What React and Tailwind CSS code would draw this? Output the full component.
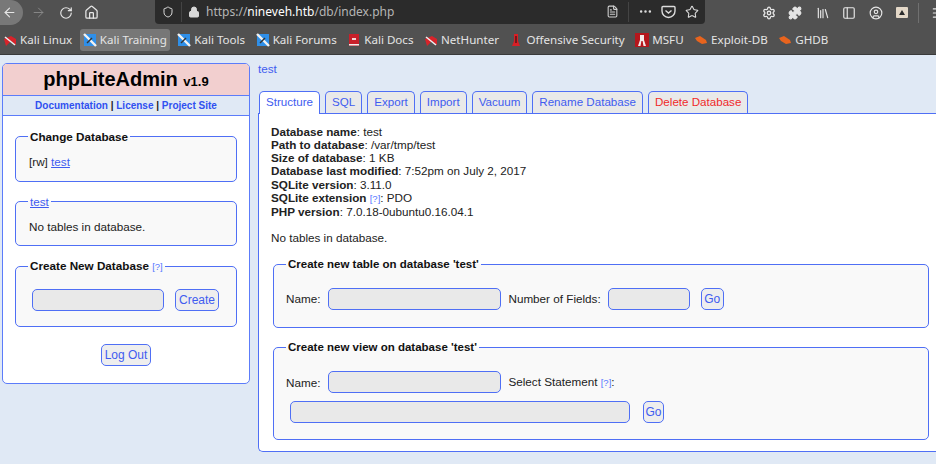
import React from 'react';
import { ArrowLeft, ArrowRight, RotateCw, Home, Shield, Lock, FileText, Ellipsis, Star, Settings, Puzzle, Library, PanelLeft, CircleUser, Menu } from 'lucide-react';

const bookmarks = [
  { name: 'Kali Linux', icon: 'kali' },
  { name: 'Kali Training', icon: 'blue', active: true },
  { name: 'Kali Tools', icon: 'blue' },
  { name: 'Kali Forums', icon: 'blue' },
  { name: 'Kali Docs', icon: 'docs' },
  { name: 'NetHunter', icon: 'kali' },
  { name: 'Offensive Security', icon: 'offsec' },
  { name: 'MSFU', icon: 'msfu' },
  { name: 'Exploit-DB', icon: 'orange' },
  { name: 'GHDB', icon: 'orange' },
];

const BookmarkIcon = ({ type }) => {
  if (type === 'kali') {
    return (
      <svg width="14" height="14" viewBox="0 0 14 14" className="shrink-0">
        <path d="M1 6 L8 3 L13 6 L13 12 L8 8 L3 13 Z" fill="#d8232a" />
        <path d="M2 4 L12 12" stroke="#eee" strokeWidth="1.6" />
      </svg>
    );
  }
  if (type === 'blue') {
    return (
      <svg width="14" height="14" viewBox="0 0 14 14" className="shrink-0">
        <rect x="1" y="1" width="12" height="12" fill="#2f8fe8" />
        <path d="M1 1 L13 13" stroke="#f2f2f2" strokeWidth="2.4" />
        <path d="M4 10 L9 5" stroke="#333" strokeWidth="1.4" />
      </svg>
    );
  }
  if (type === 'docs') {
    return (
      <svg width="14" height="14" viewBox="0 0 14 14" className="shrink-0">
        <rect x="2" y="1" width="10" height="12" fill="#c8202a" />
        <rect x="5" y="5" width="4" height="2" fill="#f3d6d6" />
        <rect x="2" y="11" width="10" height="1.5" fill="#eee" />
      </svg>
    );
  }
  if (type === 'offsec') {
    return (
      <svg width="14" height="14" viewBox="0 0 14 14" className="shrink-0">
        <path d="M5 1 H9 V8 L11 13 H3 L5 8 Z" fill="#d81f26" />
        <rect x="6.4" y="3" width="1.2" height="7" fill="#3a1010" />
      </svg>
    );
  }
  if (type === 'msfu') {
    return (
      <svg width="14" height="14" viewBox="0 0 14 14" className="shrink-0">
        <rect width="14" height="14" fill="#b5161c" />
        <path d="M5 2 H9 V7 L11 13 H8.5 L7.6 8 H6.4 L5.5 13 H3 L5 7 Z" fill="#f4e9e9" />
      </svg>
    );
  }
  return (
    <svg width="14" height="14" viewBox="0 0 14 14" className="shrink-0">
      <path d="M1 5 L6 3 L12 7 L13 10 L8 11 L3 8 Z" fill="#e8641e" />
    </svg>
  );
};

const Help = () => <a className="text-[9.5px] font-normal text-[#5577ff]">[?]</a>;

const Field = ({ w }) => (
  <div className={`${w} h-[22px] shrink-0 bg-[#e9e9e9] border border-[#4f6ff5] rounded-[5px]`} />
);

const Btn = ({ children, w }) => (
  <button className={`${w} h-[22px] shrink-0 bg-[#eeeeee] border border-[#4f6ff5] rounded-[5px] text-[#3f5cf0] text-[12px] leading-none`}>
    {children}
  </button>
);

const Tab = ({ children, active, red }) => (
  <div
    className={`px-[6px] pt-[2px] border border-b-0 border-[#4f6ff5] rounded-t-[5px] text-[11.6px] leading-[16px] relative ${
      active ? 'bg-white text-[#3f5cf0] h-[23px] mb-[-1px] z-10' : 'h-[22px] bg-[#e9e9e9]'
    } ${red ? 'text-[#f02a2a]' : active ? '' : 'text-[#3f5cf0]'}`}
  >
    {children}
  </div>
);

export default function App() {
  return (
    <div className="w-[936px] h-[464px] overflow-hidden bg-[#e0e9f5] font-['Liberation_Sans',Arial,sans-serif] text-[11.7px] leading-[13.3px] text-[#222]">
      {/* browser chrome */}
      <div className="h-[55px] bg-[#515151] border-b border-[#3a3a3a] font-['Noto_Sans',sans-serif]">
        <div className="h-[25px] flex items-center text-[#e6e6e6]">
          <div className="w-[23px] h-[25px] rounded-r-full bg-[#787878] flex items-center justify-end pr-[6px] shrink-0">
            <ArrowLeft size={15} strokeWidth={1.8} />
          </div>
          <ArrowRight size={15} strokeWidth={1.5} className="ml-[8px] text-[#8a8a8a] shrink-0" />
          <RotateCw size={14} strokeWidth={2} className="ml-[13px] shrink-0" />
          <Home size={15} strokeWidth={2} className="ml-[11px] shrink-0" />
          <div className="ml-[56px] w-[550px] h-[24px] -mt-[2px] rounded-b-[4px] bg-[#2b2b2b] flex items-center pl-[7px] text-[12px] text-[#b5b5b5] shrink-0">
            <Shield size={12} strokeWidth={2} className="text-[#dcdcdc]" />
            <div className="w-px h-[20px] bg-[#444] ml-[7px]" />
            <Lock size={12} fill="#d8d8d8" className="ml-[6px] text-[#d8d8d8]" />
            <span className="ml-[6px]">https://<span className="text-white">nineveh.htb</span>/db/index.php</span>
            <FileText size={13} className="ml-auto text-[#cfcfcf]" />
            <div className="w-px h-[20px] bg-[#444] ml-[9px]" />
            <Ellipsis size={15} className="ml-[9px] text-[#dcdcdc]" />
            <svg width="15" height="14" viewBox="0 0 15 14" className="ml-[8px] text-[#dcdcdc]" fill="none" stroke="currentColor" strokeWidth="1.4">
              <path d="M2 1.5 H13 A1 1 0 0 1 14 2.5 V6 A6.5 6.5 0 0 1 1 6 V2.5 A1 1 0 0 1 2 1.5 Z" />
              <path d="M4.5 5.5 L7.5 8 L10.5 5.5" />
            </svg>
            <Star size={14} strokeWidth={1.8} className="ml-[9px] mr-[6px] text-[#dcdcdc]" />
          </div>
          <Settings size={14} strokeWidth={2.2} className="ml-[57px] shrink-0" />
          <Puzzle size={14} fill="currentColor" className="ml-[12px] shrink-0" />
          <Library size={14} className="ml-[14px] shrink-0" />
          <PanelLeft size={14} className="ml-[12px] shrink-0" />
          <CircleUser size={14} className="ml-[13px] shrink-0" />
          <svg width="12" height="12" viewBox="0 0 12 12" className="ml-[13px] shrink-0">
            <rect width="12" height="11" rx="1" fill="#e4d8c8" />
            <path d="M3 8 L6 3 L9 8 Z" fill="#2a2a2a" />
          </svg>
          <div className="w-px h-[20px] bg-[#707070] ml-[10px] shrink-0" />
          <Menu size={14} className="ml-[12px] shrink-0" />
        </div>
        <div className="h-[29px] flex items-center text-[11.6px] text-[#e4e4e4] whitespace-nowrap">
          {bookmarks.map((b) => (
            <div
              key={b.name}
              className={`h-[22px] flex items-center gap-[3px] px-[3px] mr-[4.5px] rounded-[3px] ${b.active ? 'bg-[#777777]' : ''}`}
            >
              <BookmarkIcon type={b.icon} />
              <span>{b.name}</span>
            </div>
          ))}
        </div>
      </div>

      <div className="flex items-start">
        {/* sidebar */}
        <div className="w-[248px] ml-[2px] mt-[8px] shrink-0 bg-white border border-[#5c7cfa] rounded-[5px] overflow-hidden h-[321px]">
          <div className="h-[32px] bg-[#f2cfcf] border-b border-[#5c7cfa] text-center font-bold text-black text-[20px] leading-[31px]">
            phpLiteAdmin <span className="text-[13px]">v1.9</span>
          </div>
          <div className="h-[20px] bg-[#e0e9f5] border-b border-[#5c7cfa] text-center font-bold text-[10px] leading-[19px] text-[#222]">
            <a className="text-[#2f50f0]">Documentation</a> | <a className="text-[#2f50f0]">License</a> | <a className="text-[#2f50f0]">Project Site</a>
          </div>
          <div className="px-[12px] pt-[14px]">
            <fieldset className="h-[52px] border border-[#4f6ff5] rounded-[5px] bg-[#f9f9f9] pl-[13px] pt-[12px]">
              <legend className="-ml-px px-[2px] font-bold text-[11.7px] leading-[13px] text-[#111]">Change Database</legend>
              [rw] <a className="text-[#3f5cf0] underline">test</a>
            </fieldset>
            <fieldset className="mt-[13px] h-[51px] border border-[#4f6ff5] rounded-[5px] bg-[#f9f9f9] pl-[13px] pt-[12px]">
              <legend className="-ml-px px-[2px] text-[11.7px] leading-[13px] text-[#3f5cf0] underline">test</legend>
              No tables in database.
            </fieldset>
            <fieldset className="mt-[13px] h-[68px] border border-[#4f6ff5] rounded-[5px] bg-[#f9f9f9] pl-[16px] pt-[16px]">
              <legend className="-ml-[4px] px-[2px] font-bold text-[11.7px] leading-[13px] text-[#111]">Create New Database <Help /></legend>
              <div className="flex items-center gap-[11px]">
                <Field w="w-[132px]" />
                <Btn w="w-[44px]">Create</Btn>
              </div>
            </fieldset>
          </div>
          <div className="flex justify-center mt-[17px]">
            <Btn w="w-[50px]">Log Out</Btn>
          </div>
        </div>

        {/* main */}
        <div className="ml-[8px] flex-1 min-w-0">
          <div className="h-[28px] pt-[7px] text-[#3f5cf0]">test</div>
          <div className="flex gap-[5px] ml-[1px] mt-[8px]">
            <Tab active>Structure</Tab>
            <Tab>SQL</Tab>
            <Tab>Export</Tab>
            <Tab>Import</Tab>
            <Tab>Vacuum</Tab>
            <Tab>Rename Database</Tab>
            <Tab red>Delete Database</Tab>
          </div>
          <div className="h-[339px] bg-white border border-[#4f6ff5] rounded-bl-[5px] border-r-0 pl-[12px] pt-[10.5px]">
            <div><b>Database name</b>: test</div>
            <div><b>Path to database</b>: /var/tmp/test</div>
            <div><b>Size of database</b>: 1 KB</div>
            <div><b>Database last modified</b>: 7:52pm on July 2, 2017</div>
            <div><b>SQLite version</b>: 3.11.0</div>
            <div><b>SQLite extension</b> <Help />: PDO</div>
            <div><b>PHP version</b>: 7.0.18-0ubuntu0.16.04.1</div>
            <div className="mt-[12px]">No tables in database.</div>
            <fieldset className="mt-[14px] ml-[2px] h-[70px] mr-[7px] border border-[#4f6ff5] rounded-[5px] bg-[#f9f9f9] pl-[12px] pt-[17px]">
              <legend className="ml-0 px-[2px] font-bold text-[11.5px] leading-[13px] text-[#111]">Create new table on database 'test'</legend>
              <div className="flex items-center">
                <span className="mr-[8px]">Name:</span>
                <Field w="w-[173px]" />
                <span className="ml-[7px]">Number of Fields:</span>
                <span className="ml-[7px]"><Field w="w-[82px]" /></span>
                <span className="ml-[11px]"><Btn w="w-[23px]">Go</Btn></span>
              </div>
            </fieldset>
            <fieldset className="mt-[13.5px] ml-[2px] h-[99px] mr-[7px] border border-[#4f6ff5] rounded-[5px] bg-[#f9f9f9] pl-[12px] pt-[17px]">
              <legend className="ml-0 px-[2px] font-bold text-[11.5px] leading-[13px] text-[#111]">Create new view on database 'test'</legend>
              <div className="flex items-center">
                <span className="mr-[8px]">Name:</span>
                <Field w="w-[173px]" />
                <span className="ml-[7px]">Select Statement <Help />:</span>
              </div>
              <div className="flex items-center ml-[4px] mt-[8px]">
                <Field w="w-[340px]" />
                <span className="ml-[13px]"><Btn w="w-[21px]">Go</Btn></span>
              </div>
            </fieldset>
          </div>
        </div>
      </div>
    </div>
  );
}
